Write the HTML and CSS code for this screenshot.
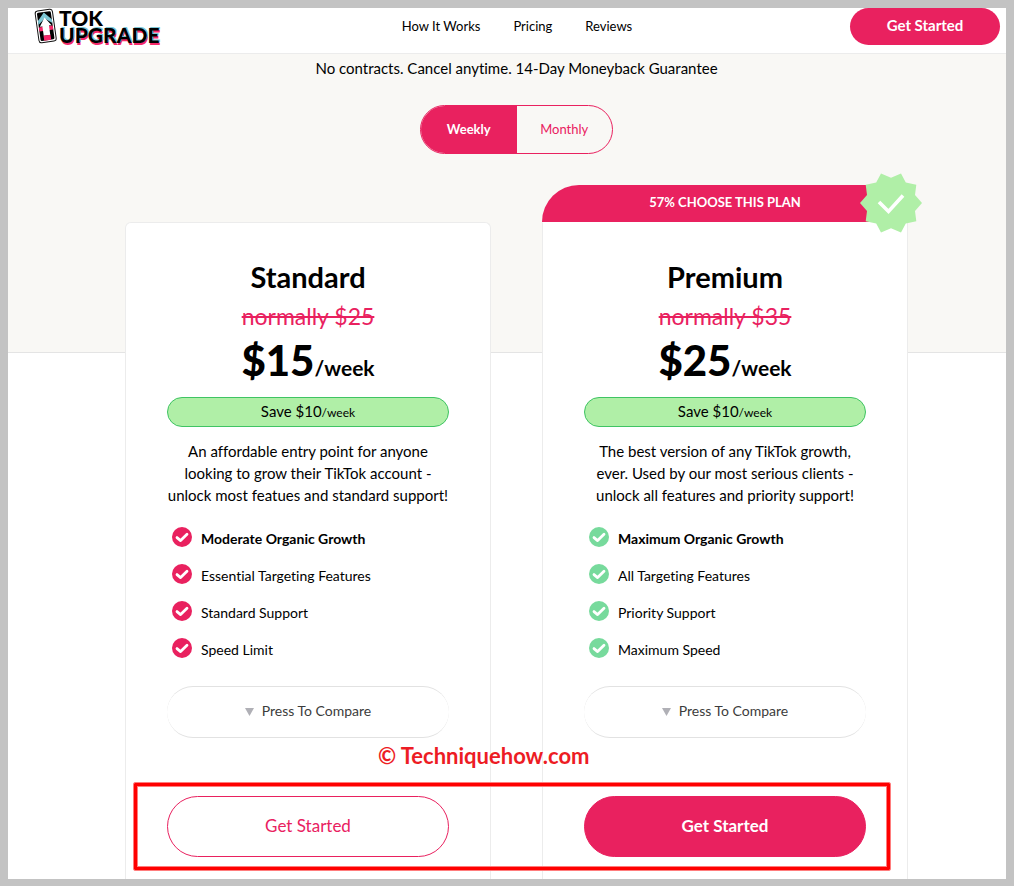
FILE: index.html
```html
<!DOCTYPE html>
<html lang="en">
<head>
<meta charset="utf-8">
<title>Tok Upgrade – Pricing</title>
<link rel="stylesheet" href="styles.css">
</head>
<body>
<svg class="defs" aria-hidden="true">
  <symbol id="check" viewBox="0 0 20 20">
    <circle cx="10" cy="10" r="10" fill="currentColor"/>
    <path d="M5 10.6 8.6 13.6 15 7.3" fill="none" stroke="#fff" stroke-width="2.8" stroke-linecap="round" stroke-linejoin="round"/>
  </symbol>
  <symbol id="arrow" viewBox="0 0 9 8"><path d="M0 0H9L4.5 8Z" fill="currentColor"/></symbol>
</svg>
<div class="page">
  <header class="header">
    <a class="logo" href="#">
      <svg class="logo-icon" viewBox="0 0 24 36" aria-hidden="true">
        <g transform="rotate(-8 12 18)">
          <rect x="3" y="2" width="17.4" height="32" rx="2.6" fill="#fff" stroke="#111" stroke-width="1"/>
          <rect x="4.7" y="3.8" width="14" height="28.4" rx="1.4" fill="#000"/>
          <path d="M11.7 4.4 18.7 12V16L11.7 10.4 4.7 16V12Z" fill="#7cc6d4"/>
          <path d="M4.7 18.5H18.7V22.5H4.7Z" fill="#f5286a"/>
          <path d="M11.7 9.4 17.6 18H15V27.4H8.4V18H5.8Z" fill="#fff"/>
          <path d="M8.2 27.4H15.2V32.4H8.2Z" fill="#f5286a"/>
        </g>
      </svg>
      <span class="logo-text"><span>TOK</span><span class="logo-glitch">UPGRADE</span></span>
    </a>
    <nav class="nav">
      <a href="#how">How It Works</a>
      <a href="#pricing">Pricing</a>
      <a href="#reviews">Reviews</a>
    </nav>
    <button class="header-cta" type="button">Get Started</button>
  </header>
  <main class="pricing" id="pricing">
    <p class="tagline">No contracts. Cancel anytime. 14-Day Moneyback Guarantee</p>
    <div class="toggle" role="group" aria-label="Billing period">
      <button class="toggle-item active" type="button" aria-pressed="true">Weekly</button>
      <button class="toggle-item" type="button" aria-pressed="false">Monthly</button>
    </div>
    <div class="plans">
      <section class="plan">
        <div class="card">
          <h2>Standard</h2>
          <s class="old-price">normally $25</s>
          <p class="price">$15<small>/week</small></p>
          <p class="save">Save $10<small>/week</small></p>
          <p class="summary">An affordable entry point for anyone<br>looking to grow their TikTok account -<br>unlock most featues and standard support!</p>
          <ul class="features">
            <li><svg class="check"><use href="#check"/></svg><strong>Moderate Organic Growth</strong></li>
            <li><svg class="check"><use href="#check"/></svg><span>Essential Targeting Features</span></li>
            <li><svg class="check"><use href="#check"/></svg><span>Standard Support</span></li>
            <li><svg class="check"><use href="#check"/></svg><span>Speed Limit</span></li>
          </ul>
          <button class="compare" type="button"><svg class="arrow"><use href="#arrow"/></svg>Press To Compare</button>
          <button class="cta" type="button">Get Started</button>
        </div>
      </section>
      <section class="plan premium">
        <div class="banner">57% CHOOSE THIS PLAN
          <svg class="badge" viewBox="-31 -30 62 60" aria-hidden="true">
            <path d="M-10-29.5 0-25.3 10-29.5 14.8-20.5 25.3-18.3 24-8 31 0 24 8 25.3 18.3 14.8 20.5 10 29.5 0 25.3-10 29.5-14.8 20.5-25.3 18.3-24 8-31 0-24-8-25.3-18.3-14.8-20.5Z" fill="#b0efa7"/>
            <path d="M-12-1-2.5 8.5 12-7.5" fill="none" stroke="#fff" stroke-width="3.6"/>
          </svg>
        </div>
        <div class="card">
          <h2>Premium</h2>
          <s class="old-price">normally $35</s>
          <p class="price">$25<small>/week</small></p>
          <p class="save">Save $10<small>/week</small></p>
          <p class="summary">The best version of any TikTok growth,<br>ever. Used by our most serious clients -<br>unlock all features and priority support!</p>
          <ul class="features">
            <li><svg class="check"><use href="#check"/></svg><strong>Maximum Organic Growth</strong></li>
            <li><svg class="check"><use href="#check"/></svg><span>All Targeting Features</span></li>
            <li><svg class="check"><use href="#check"/></svg><span>Priority Support</span></li>
            <li><svg class="check"><use href="#check"/></svg><span>Maximum Speed</span></li>
          </ul>
          <button class="compare" type="button"><svg class="arrow"><use href="#arrow"/></svg>Press To Compare</button>
          <button class="cta" type="button">Get Started</button>
        </div>
      </section>
      <div class="highlight"></div>
      <p class="watermark">© Techniquehow.com</p>
    </div>
  </main>
</div>
</body>
</html>
```
FILE: styles.css
```css
* { box-sizing: border-box; }

:root {
  --pink: #e9215f;
  --line: #ececec;
}

body {
  margin: 0;
  padding: 8px 8px 7px;
  background: #c3c3c3;
  color: #000;
  font-family: Lato, "Open Sans", sans-serif;
  font-size: 15px;
  font-variant-ligatures: none;
}

h2, p, ul { margin: 0; padding: 0; }
button { font: inherit; cursor: pointer; }
a { color: inherit; text-decoration: none; }
.defs { position: absolute; width: 0; height: 0; }

.page { background: #fff; }

.header {
  display: grid;
  grid-template-columns: 1fr auto 1fr;
  align-items: start;
  height: 46px;
  padding: 0 6px 0 26px;
  border-bottom: 1px solid var(--line);
}

.logo { display: flex; gap: 1px; }
.logo-icon { width: 24px; height: 36px; }
.logo-text {
  display: flex;
  flex-direction: column;
  padding-top: 1px;
  font-size: 21px;
  font-weight: 900;
  line-height: 17px;
}
.logo-glitch { text-shadow: 1px -1px 0 #7cc6d4, 1px 2px 0 #f5286a; }

.nav { display: flex; gap: 33px; font-size: 13px; line-height: 36px; }

.header-cta {
  justify-self: end;
  width: 150px;
  height: 37px;
  padding: 0 0 3px;
  border: 0;
  border-radius: 19px;
  background: var(--pink);
  color: #fff;
  font-weight: 700;
}

.pricing {
  display: flex;
  flex-direction: column;
  align-items: center;
  padding: 4px 98px 0 117px;
  background: linear-gradient(#f9f8f5 298px, #e4e4e4 298px 299px, #fff 299px);
}

.tagline { line-height: 20px; }

.toggle {
  display: flex;
  width: 193px;
  height: 49px;
  margin: 27px 0 31px;
  border: 1px solid var(--pink);
  border-radius: 25px;
  overflow: hidden;
}
.toggle-item {
  flex: 1;
  padding: 0 0 2px;
  border: 0;
  background: none;
  color: var(--pink);
  font-size: 13px;
}
.toggle-item.active { background: var(--pink); color: #fff; font-weight: 700; }

.plans {
  position: relative;
  display: grid;
  grid-template-columns: 1fr 1fr;
  gap: 51px;
  align-items: end;
  align-self: stretch;
}

.banner {
  position: relative;
  height: 37px;
  border-radius: 37px 37px 0 0;
  background: var(--pink);
  color: #fff;
  font-size: 13px;
  font-weight: 700;
  line-height: 34px;
  text-align: center;
}
.badge {
  position: absolute;
  top: -12px;
  right: -14px;
  width: 62px;
  height: 60px;
}

.card {
  padding: 37px 41px 22px;
  border: 1px solid var(--line);
  border-bottom: 0;
  border-radius: 6px 6px 0 0;
  background: #fff;
  text-align: center;
}
.premium .card { border-top-color: #fff; border-radius: 0; }

.card h2 { font-size: 29px; font-weight: 700; line-height: 34px; }

.old-price {
  display: block;
  margin-top: 7px;
  color: var(--pink);
  font-size: 23px;
  line-height: 30px;
}

.price { height: 49px; margin-top: 9px; font-size: 42px; font-weight: 900; line-height: 40px; }
.price small { font-size: 21px; font-weight: 700; }

.save {
  height: 30px;
  margin-top: 8px;
  border: 1px solid #3fc463;
  border-radius: 15px;
  background: #b0efa7;
  line-height: 27px;
}
.save small { font-size: 12px; }

.summary { margin: 13px -10px 0; line-height: 22px; }

.features {
  display: grid;
  margin-top: 14px;
  padding-left: 5px;
  list-style: none;
  text-align: left;
  font-size: 14px;
  line-height: 37px;
}
.features li { display: flex; gap: 9px; }
.check { flex: none; width: 20px; height: 20px; margin-top: 7px; color: var(--pink); }
.premium .check { color: #77da9c; }

.compare, .cta { display: block; width: 100%; background: #fff; }

.compare {
  height: 52px;
  margin-top: 18px;
  padding-bottom: 4px;
  border: 1px solid #e2e2e2;
  border-width: 1px 0;
  border-radius: 26px;
  color: #3c3c3c;
  font-size: 14px;
}
.arrow { width: 9px; height: 8px; margin-right: 8px; color: #b0b0b6; }

.cta {
  height: 61px;
  margin-top: 58px;
  padding-bottom: 3px;
  border: 1px solid var(--pink);
  border-radius: 31px;
  color: var(--pink);
  font-size: 17px;
}
.premium .cta { background: var(--pink); color: #fff; font-weight: 700; }

.highlight {
  position: absolute;
  right: 17px;
  bottom: 8px;
  left: 8px;
  height: 89px;
  border: 1px solid #ff7d7d;
  border-radius: 2px;
  box-shadow: 0 0 0 3px #f00 inset, 0 0 0 4px #ff7d7d inset;
  pointer-events: none;
}
.watermark {
  position: absolute;
  bottom: 109px;
  left: 253px;
  color: #ed1c24;
  font-size: 22px;
  font-weight: 700;
  line-height: 28px;
}
```
